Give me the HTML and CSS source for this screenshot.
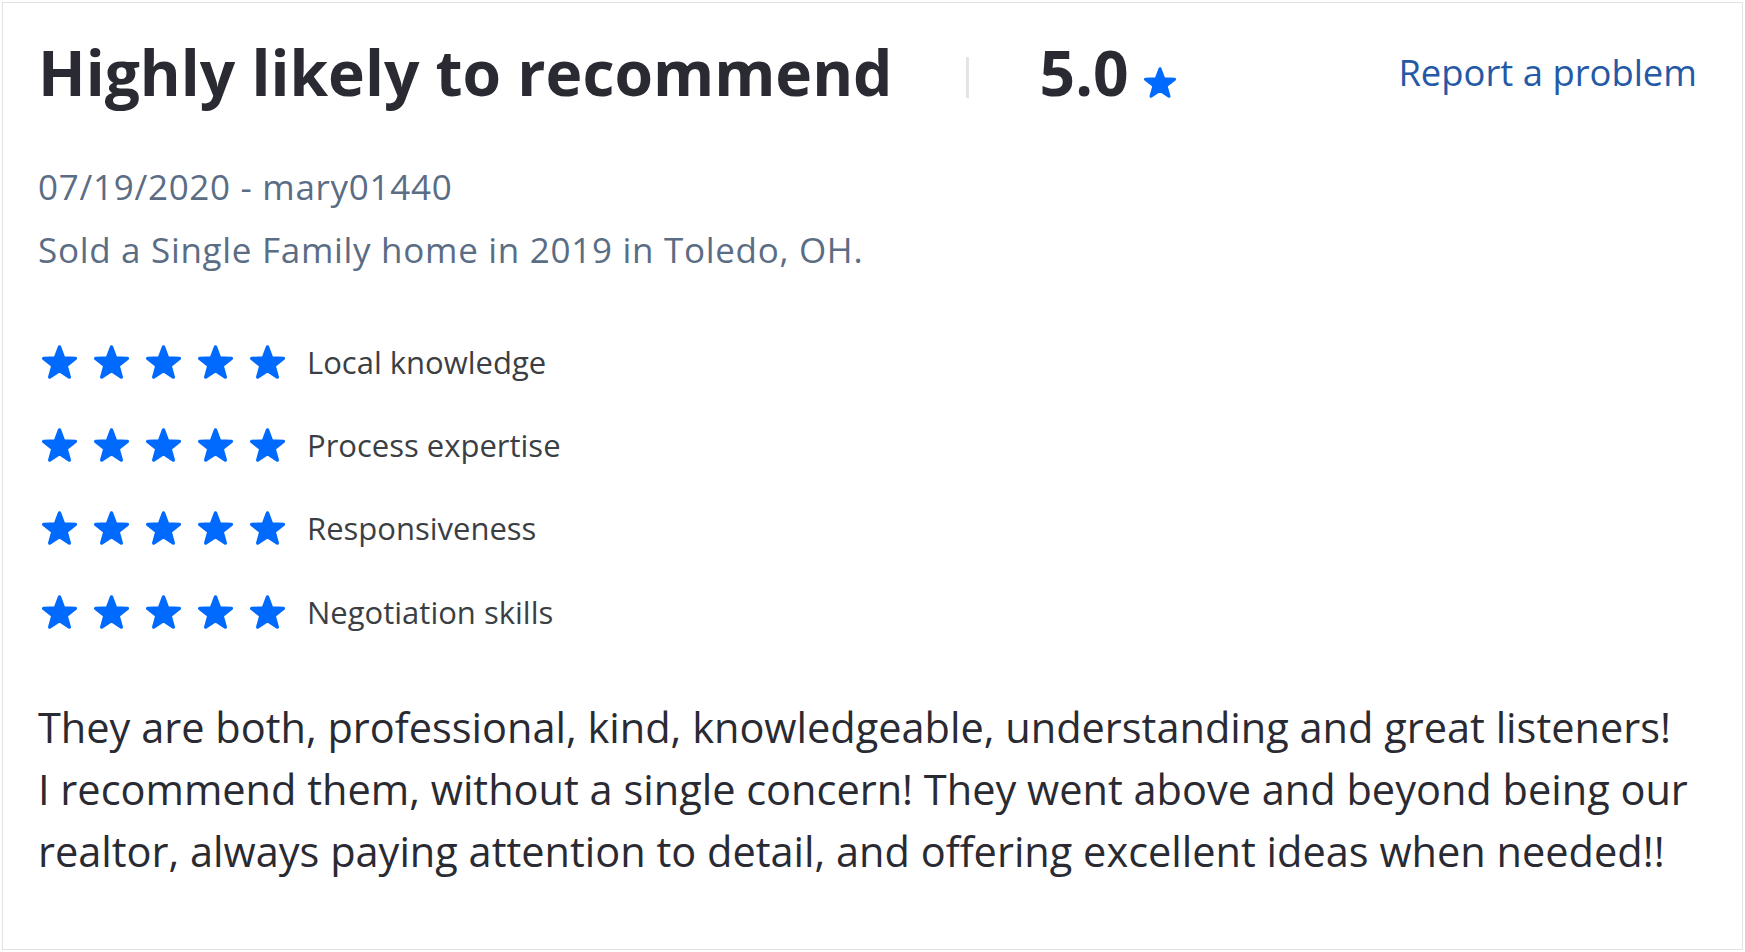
FILE: index.html
```html
<!DOCTYPE html>
<html lang="en">
<head>
<meta charset="utf-8">
<title>Review</title>
<link rel="stylesheet" href="styles.css">
</head>
<body>
<svg class="defs" width="0" height="0" aria-hidden="true">
  <defs>
    <symbol id="star" viewBox="1.5 1.5 21 20.1">
      <polygon points="12,2.5 14.47,9.1 21.51,9.41 15.99,13.8 17.88,20.59 12,16.7 6.12,20.59 8.01,13.8 2.49,9.41 9.53,9.1" fill="#006aff" stroke="#006aff" stroke-width="2" stroke-linejoin="round"/>
    </symbol>
  </defs>
</svg>
<div class="card">
  <div class="header">
    <h2 class="title">Highly likely to recommend</h2>
    <span class="divider"></span>
    <span class="score">5.0<svg class="score-star"><use href="#star"/></svg></span>
    <a class="report" href="#">Report a problem</a>
  </div>
  <div class="meta">
    <div>07/19/2020 - mary01440</div>
    <div>Sold a Single Family home in 2019 in Toledo, OH.</div>
  </div>
  <ul class="ratings">
    <li class="rating">
      <span class="stars"><svg class="star"><use href="#star"/></svg><svg class="star"><use href="#star"/></svg><svg class="star"><use href="#star"/></svg><svg class="star"><use href="#star"/></svg><svg class="star"><use href="#star"/></svg></span>
      <span class="label">Local knowledge</span>
    </li>
    <li class="rating">
      <span class="stars"><svg class="star"><use href="#star"/></svg><svg class="star"><use href="#star"/></svg><svg class="star"><use href="#star"/></svg><svg class="star"><use href="#star"/></svg><svg class="star"><use href="#star"/></svg></span>
      <span class="label">Process expertise</span>
    </li>
    <li class="rating">
      <span class="stars"><svg class="star"><use href="#star"/></svg><svg class="star"><use href="#star"/></svg><svg class="star"><use href="#star"/></svg><svg class="star"><use href="#star"/></svg><svg class="star"><use href="#star"/></svg></span>
      <span class="label">Responsiveness</span>
    </li>
    <li class="rating">
      <span class="stars"><svg class="star"><use href="#star"/></svg><svg class="star"><use href="#star"/></svg><svg class="star"><use href="#star"/></svg><svg class="star"><use href="#star"/></svg><svg class="star"><use href="#star"/></svg></span>
      <span class="label">Negotiation skills</span>
    </li>
  </ul>
  <p class="body">They are both, professional, kind, knowledgeable, understanding and great listeners!<br>I recommend them, without a single concern! They went above and beyond being our realtor, always paying attention to detail, and offering excellent ideas when needed!!</p>
</div>
</body>
</html>
```
FILE: styles.css
```css
* { box-sizing: border-box; }
html, body { margin: 0; padding: 0; background: #ffffff; }
body { font-family: "Open Sans", "Noto Sans", sans-serif; }
.defs { position: absolute; width: 0; height: 0; overflow: hidden; }

.card {
  margin: 2px 0 0 2px;
  width: 1741px;
  height: 948px;
  border: 1px solid #e2e2e2;
  padding: 32px 45px 0 35px;
}

.header {
  display: flex;
  align-items: flex-start;
}
.title {
  margin: 0;
  font-size: 62.3px;
  line-height: 74px;
  font-weight: 700;
  color: #2a2a33;
}
.divider {
  width: 3px;
  height: 41px;
  background: #e4e4e6;
  margin: 22px 71px 0 73px;
}
.score {
  font-size: 62.3px;
  line-height: 74px;
  font-weight: 700;
  color: #2a2a33;
}
.score-star {
  width: 32px;
  height: 31px;
  margin-left: 15px;
  vertical-align: -2px;
}
.report {
  margin-left: auto;
  margin-top: 13px;
  font-size: 36.4px;
  line-height: 49px;
  color: #2459a6;
  text-decoration: none;
}

.meta {
  margin-top: 46px;
  font-size: 35px;
  letter-spacing: 0.7px;
  line-height: 63px;
  color: #5b6d84;
}

.ratings {
  list-style: none;
  margin: 39px 0 0 0;
  padding: 0;
}
.rating {
  display: flex;
  align-items: center;
  height: 83.3px;
}
.stars {
  display: flex;
  gap: 17px;
  margin-left: 4px;
}
.star {
  width: 35px;
  height: 34px;
  display: block;
}
.label {
  margin-left: 22px;
  font-size: 31px;
  color: #3b3f44;
}

.body {
  margin: 43px 0 0 0;
  font-size: 41.5px;
  line-height: 62px;
  color: #2a2a33;
}
```
